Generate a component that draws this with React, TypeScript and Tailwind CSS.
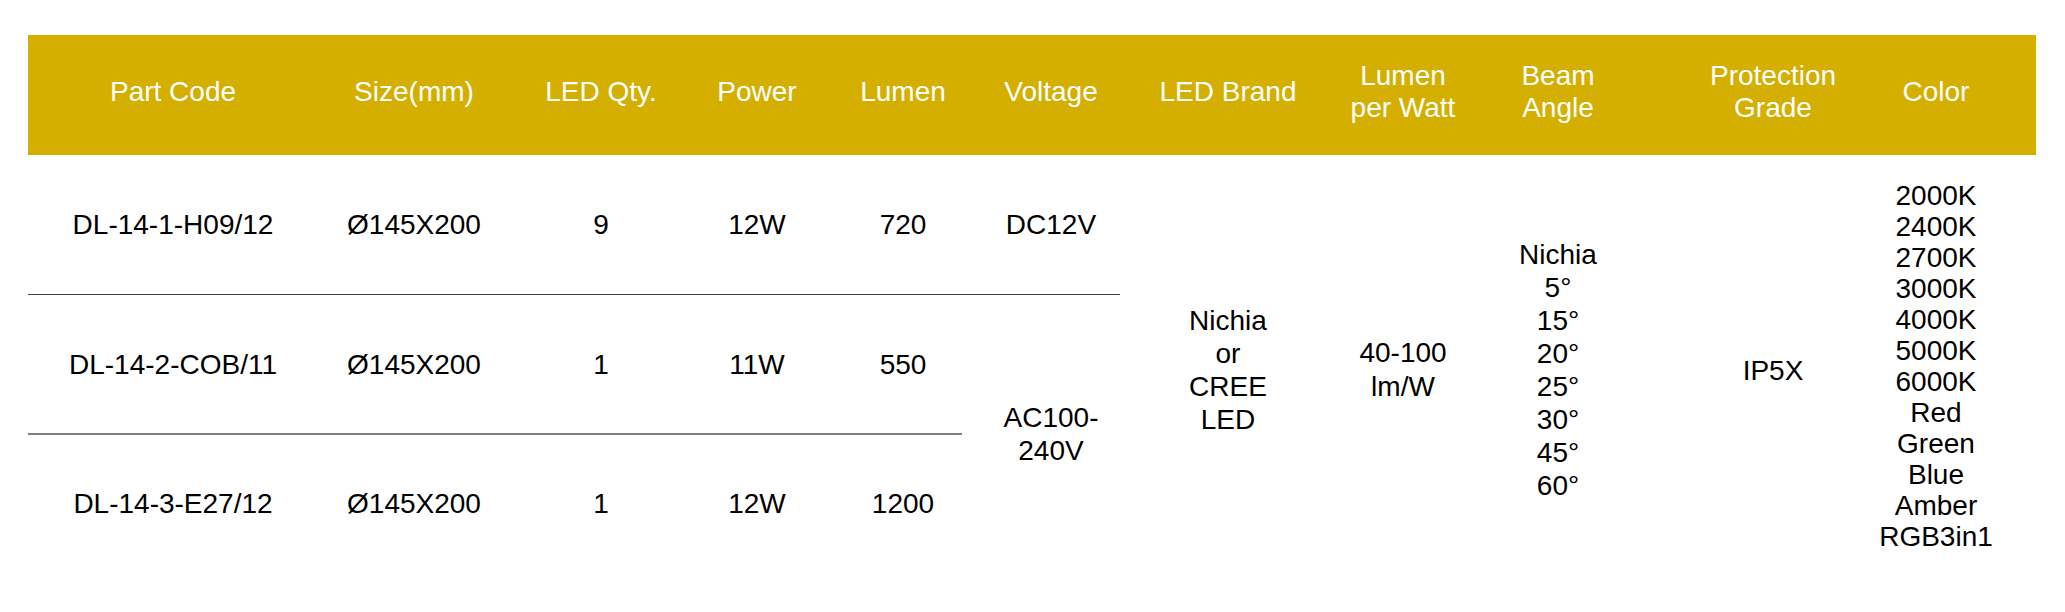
const headers: { label: React.ReactNode; pad?: string }[] = [
    { label: 'Part Code' },
    { label: 'Size(mm)' },
    { label: 'LED Qty.' },
    { label: 'Power' },
    { label: 'Lumen', pad: 'pl-[22px]' },
    { label: 'Voltage', pad: 'pl-[20px]' },
    { label: 'LED Brand' },
    { label: <>Lumen<br />per Watt</> },
    { label: <>Beam<br />Angle</> },
    { label: <>Protection<br />Grade</> },
    { label: 'Color', pad: 'pr-[64px]' },
]

const rows = [
    ['DL-14-1-H09/12', 'Ø145X200', '9', '12W', '720'],
    ['DL-14-2-COB/11', 'Ø145X200', '1', '11W', '550'],
    ['DL-14-3-E27/12', 'Ø145X200', '1', '12W', '1200'],
]

const beams = ['Nichia', '5°', '15°', '20°', '25°', '30°', '45°', '60°']
const colors = ['2000K', '2400K', '2700K', '3000K', '4000K', '5000K', '6000K', 'Red', 'Green', 'Blue', 'Amber', 'RGB3in1']

const cols = 'grid grid-cols-[290px_192px_182px_130px_140px_158px_216px_134px_176px_254px_136px]'

// row lines: thin dark under row 1, thicker grey under row 2
const rowLine = ['border-b border-[#404040]', 'border-b-2 border-[#808080]', '']

function Cells({ row, ri }: { row: string[]; ri: number }) {
    return (
        <>
            {row.map((v, ci) => (
                <div key={ci} className={`flex items-center justify-center whitespace-nowrap ${ci === 4 ? 'pl-[22px]' : ''} ${rowLine[ri]}`}>
                    {v}
                </div>
            ))}
        </>
    )
}

export default function App() {
    return (
        <div className="min-h-[612px] w-[2065px] bg-white pl-[28px] pt-[35px] font-['Liberation_Sans',Arial,sans-serif] text-[28px] text-black">
            {/* header bar */}
            <div className={`${cols} h-[120px] w-[2008px] bg-[#d4af00] text-white`}>
                {headers.map((h, i) => (
                    <div key={i} className={`flex items-center justify-center pb-[6px] text-center leading-[32px] whitespace-nowrap ${h.pad ?? ''}`}>
                        <div>{h.label}</div>
                    </div>
                ))}
            </div>

            {/* body: auto placement fills around the spanning cells */}
            <div className={`${cols} grid-rows-[140px_140px_137px] w-[2008px] leading-[33px]`}>
                <Cells row={rows[0]} ri={0} />
                <div className="flex items-center justify-center border-b border-[#404040] pl-[20px]">DC12V</div>
                <div className="row-span-3 flex items-center justify-center pt-[13px] text-center">
                    <div>Nichia<br />or<br />CREE<br />LED</div>
                </div>
                <div className="row-span-3 flex items-center justify-center pt-[13px] text-center leading-[34px]">
                    <div>40-100<br />lm/W</div>
                </div>
                <div className="row-span-3 flex flex-col items-center justify-center pt-[13px]">
                    {beams.map(b => <div key={b}>{b}</div>)}
                </div>
                <div className="row-span-3 flex items-center justify-center pt-[13px]">IP5X</div>
                <div className="row-span-3 flex flex-col items-center justify-center whitespace-nowrap pr-[64px] pt-[5px] leading-[31px]">
                    {colors.map(c => <div key={c}>{c}</div>)}
                </div>

                <Cells row={rows[1]} ri={1} />
                <div className="row-span-2 flex items-center justify-center pl-[20px] text-center">
                    <div>AC100-<br />240V</div>
                </div>

                <Cells row={rows[2]} ri={2} />
            </div>
        </div>
    )
}
